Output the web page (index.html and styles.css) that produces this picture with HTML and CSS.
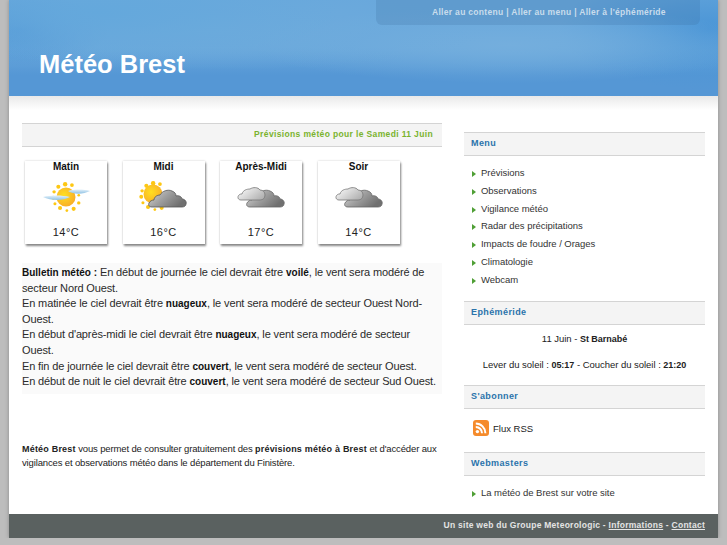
FILE: index.html
```html
<!DOCTYPE html>
<html lang="fr">
  <head>
    <meta charset="UTF-8" />
    <title>Météo Brest</title>
    <link rel="stylesheet" href="styles.css">
  </head>
  <body>
    <svg class="defs" width="0" height="0" aria-hidden="true">
      <defs>
        <linearGradient id="grey" x1="0" y1="0" x2="1" y2="0.5">
          <stop offset="0" stop-color="#d8d8d8" />
          <stop offset="0.5" stop-color="#a0a0a0" />
          <stop offset="1" stop-color="#707070" />
        </linearGradient>
        <linearGradient id="pale" x1="0" y1="0" x2="1" y2="0.6">
          <stop offset="0" stop-color="#ffffff" />
          <stop offset="1" stop-color="#b4b4b4" />
        </linearGradient>
        <linearGradient id="veil" x1="0" y1="0" x2="0" y2="1">
          <stop offset="0" stop-color="#e4f1fa" />
          <stop offset="1" stop-color="#8fc2e4" />
        </linearGradient>
        <radialGradient id="sun" cx="0.4" cy="0.4" r="0.7">
          <stop offset="0" stop-color="#ffdf20" />
          <stop offset="1" stop-color="#f8a828" />
        </radialGradient>
        <g id="rays">
          <circle cx="25" cy="3" r="2.2" />
          <circle cx="17" cy="2" r="2.6" />
          <circle cx="9" cy="5" r="2.4" />
          <circle cx="4" cy="11" r="2" />
          <circle cx="3" cy="18" r="2.3" />
          <circle cx="5" cy="25" r="1.8" />
          <circle cx="11" cy="30" r="2.4" />
          <circle cx="19" cy="33" r="1.6" />
          <circle cx="27" cy="31" r="2.4" />
          <circle cx="33" cy="24" r="2" />
          <circle cx="33" cy="15" r="1.6" />
        </g>
        <path id="cloud-big" d="M14 26c-3 0-4-2-3-4 1-2 3-3 5-3 0-3 3-5 6-5 2-4 8-6 12-4 3 1 4 3 4 5 3-1 6 1 6 3 3 0 5 3 4 5 0 2-2 3-4 3z" />
        <path id="cloud-small" d="M6 19c-3 0-4-3-2-5 1-1 2-1 3-1 1-4 5-5 8-5 3-2 8-2 10 1 3 0 5 2 5 5 0 3-2 5-5 5z" />
      </defs>
    </svg>

    <div class="page">
      <header class="top">
        <nav class="skip">
          <a href="#contenu">Aller au contenu</a> | <a href="#menu">Aller au menu</a> | <a href="#ephemeride">Aller à l'éphéméride</a>
        </nav>
        <h1>Météo Brest</h1>
      </header>

      <div class="columns">
        <main class="content" id="contenu">
          <h2 class="forecast-title">Prévisions météo pour le Samedi 11 Juin</h2>

          <div class="cards">
            <section class="card">
              <h3>Matin</h3>
              <svg class="weather" width="52" height="36" viewBox="0 0 52 36">
                <use href="#rays" transform="translate(10.7 1.5) scale(.85)" fill="#fdc713" />
                <circle cx="26" cy="16" r="9.5" fill="url(#sun)" />
                <path d="M28 10c6-2 16-2 22 0-6 3-16 4-22 0z" fill="url(#veil)" />
                <path d="M3 16c8-2 19-2 27 0-7 4-19 4-27 0z" fill="url(#veil)" />
              </svg>
              <p>14°C</p>
            </section>
            <section class="card">
              <h3>Midi</h3>
              <svg class="weather" width="52" height="36" viewBox="0 0 52 36">
                <use href="#rays" transform="translate(.7 .5) scale(.85)" fill="#fdc713" />
                <circle cx="15" cy="13" r="9.5" fill="url(#sun)" />
                <use href="#cloud-big" fill="url(#grey)" stroke="#555" stroke-width="0.8" />
              </svg>
              <p>16°C</p>
            </section>
            <section class="card">
              <h3>Après-Midi</h3>
              <svg class="weather" width="52" height="36" viewBox="0 0 52 36">
                <use href="#cloud-big" x="1" fill="url(#grey)" stroke="#666" stroke-width="0.8" />
                <use href="#cloud-small" fill="url(#pale)" stroke="#777" stroke-width="0.8" />
              </svg>
              <p>17°C</p>
            </section>
            <section class="card">
              <h3>Soir</h3>
              <svg class="weather" width="52" height="36" viewBox="0 0 52 36">
                <use href="#cloud-big" x="1" fill="url(#grey)" stroke="#666" stroke-width="0.8" />
                <use href="#cloud-small" fill="url(#pale)" stroke="#777" stroke-width="0.8" />
              </svg>
              <p>14°C</p>
            </section>
          </div>

          <p class="bulletin">
            <strong>Bulletin météo :</strong> En début de journée le ciel devrait être <strong>voilé</strong>, le vent sera modéré de secteur Nord Ouest.<br>
            En matinée le ciel devrait être <strong>nuageux</strong>, le vent sera modéré de secteur Ouest Nord-Ouest.<br>
            En début d'après-midi le ciel devrait être <strong>nuageux</strong>, le vent sera modéré de secteur Ouest.<br>
            En fin de journée le ciel devrait être <strong>couvert</strong>, le vent sera modéré de secteur Ouest.<br>
            En début de nuit le ciel devrait être <strong>couvert</strong>, le vent sera modéré de secteur Sud Ouest.
          </p>

          <p class="about">
            <strong>Météo Brest</strong> vous permet de consulter gratuitement des <strong>prévisions météo à Brest</strong> et d'accéder aux vigilances et observations météo dans le département du Finistère.
          </p>
        </main>

        <aside class="side">
          <h2 id="menu">Menu</h2>
          <ul class="links">
            <li><a href="#">Prévisions</a></li>
            <li><a href="#">Observations</a></li>
            <li><a href="#">Vigilance météo</a></li>
            <li><a href="#">Radar des précipitations</a></li>
            <li><a href="#">Impacts de foudre / Orages</a></li>
            <li><a href="#">Climatologie</a></li>
            <li><a href="#">Webcam</a></li>
          </ul>

          <h2 id="ephemeride">Ephéméride</h2>
          <div class="almanac">
            <p>11 Juin - <strong>St Barnabé</strong></p>
            <p>Lever du soleil : <strong>05:17</strong> - Coucher du soleil : <strong>21:20</strong></p>
          </div>

          <h2>S'abonner</h2>
          <a class="rss" href="#">
            <svg width="16" height="16" viewBox="0 0 16 16">
              <rect width="16" height="16" rx="3" fill="#f58b2c" />
              <circle cx="4.4" cy="11.6" r="1.7" fill="#fff" />
              <path d="M2.8 7a6.2 6.2 0 0 1 6.2 6.2M2.8 3.6a9.6 9.6 0 0 1 9.6 9.6" fill="none" stroke="#fff" stroke-width="2" />
            </svg>
            Flux RSS
          </a>

          <h2>Webmasters</h2>
          <ul class="links">
            <li><a href="#">La météo de Brest sur votre site</a></li>
          </ul>
        </aside>
      </div>

      <footer class="bottom">
        Un site web du Groupe Meteorologic - <a href="#">Informations</a> - <a href="#">Contact</a>
      </footer>
    </div>
  </body>
</html>
```

FILE: styles.css
```css
:root {
  --font-family: "Liberation Sans", Arial, sans-serif;
  --color-text: #222;
  --color-line: #d4d4d4;
  --color-band: #f4f4f4;
  --color-blue: #2a73ab;
  --color-green: #7ab32e;
}

* {
  box-sizing: border-box;
  margin: 0;
  padding: 0;
}

body {
  background-color: #bdbdbd;
  color: var(--color-text);
  font-family: var(--font-family);
  font-size: 12px;
}

a {
  color: inherit;
  text-decoration: none;
}

.defs {
  display: block;
  height: 0;
}

.page {
  background-color: #fff;
  box-shadow: 0 0 4px #8a8a8a;
  margin: 0 9px;
}

/* header */
.top {
  background-color: #5597d5;
  background-image:
    radial-gradient(ellipse 240px 50px at 90px 12px, #64a8dc 0%, rgb(100 168 220 / 0) 100%),
    radial-gradient(ellipse 280px 40px at 200px 30px, #6eabdc 0%, rgb(110 171 220 / 0) 100%),
    radial-gradient(ellipse 260px 38px at 500px 45px, #74aedd 0%, rgb(116 174 221 / 0) 100%),
    radial-gradient(ellipse 150px 60px at 700px 30px, #4a95d6 0%, rgb(74 149 214 / 0) 100%),
    radial-gradient(ellipse 90px 35px at 10px 30px, #4a92d4 0%, rgb(74 146 212 / 0) 100%),
    linear-gradient(#69a8dc 0, #69a8dc 50%, #5597d5 78%);
  display: flex;
  flex-direction: column;
  height: 96px;
  padding-left: 30px;
}

.skip {
  align-self: flex-end;
  background-color: rgb(60 110 160 / 0.22);
  border-radius: 0 0 6px 6px;
  color: #c9dcec;
  font-size: 8.5px;
  font-weight: bold;
  height: 25px;
  letter-spacing: 0.31px;
  line-height: 24px;
  margin-right: 18px;
  padding-left: 56px;
  width: 324px;
}

.top h1 {
  color: #fff;
  font-size: 25.5px;
  line-height: 30px;
  margin-top: 24px;
}

/* two columns */
.columns {
  background: linear-gradient(#e9e9e9 0, #fff 14px);
  display: flex;
  height: 418px;
  justify-content: space-between;
  padding: 27px 13px 0;
}

.content {
  width: 420px;
}

.forecast-title {
  background-color: var(--color-band);
  border-bottom: 1px solid var(--color-line);
  border-top: 1px solid var(--color-line);
  color: var(--color-green);
  font-size: 8.5px;
  height: 24px;
  letter-spacing: 0.36px;
  line-height: 21px;
  padding-right: 9px;
  text-align: right;
}

.cards {
  column-gap: 15.5px;
  display: flex;
  margin-top: 14px;
  padding-left: 3px;
}

.card {
  box-shadow: 1px 2px 2px #888, 0 0 2px #ccc;
  height: 83px;
  text-align: center;
  width: 82px;
}

.card h3 {
  color: #111;
  font-size: 10px;
  line-height: 12px;
}

.weather {
  display: block;
  margin: 8px auto 0;
}

.card p {
  font-size: 11px;
  letter-spacing: 0.5px;
  line-height: 14px;
  margin-top: 8px;
}

.bulletin {
  background-color: #fafafa;
  color: #2a2a2a;
  font-size: 11px;
  letter-spacing: -0.13px;
  line-height: 15.6px;
  margin-top: 19px;
  padding: 2px 0 4px;
}

.bulletin strong {
  color: #111;
  font-size: 10px;
  letter-spacing: 0;
}

.about {
  font-size: 9.5px;
  letter-spacing: -0.14px;
  line-height: 13px;
  margin-top: 48px;
}

.about strong {
  font-size: 9px;
  letter-spacing: 0.2px;
}

/* sidebar */
.side {
  margin-top: 9px;
  width: 241px;
}

.side h2 {
  background-color: var(--color-band);
  border-bottom: 1px solid var(--color-line);
  border-top: 1px solid var(--color-line);
  color: var(--color-blue);
  font-size: 9px;
  height: 24px;
  letter-spacing: 0.4px;
  line-height: 21px;
  padding-left: 7px;
}

.links {
  color: #333;
  font-size: 9.5px;
  letter-spacing: -0.03px;
  list-style-type: none;
  margin-bottom: 12px;
  padding: 8px 0 0 8px;
}

.links li {
  height: 17.8px;
  line-height: 17.8px;
  padding-left: 9px;
  position: relative;
}

.links li::before {
  border-bottom: 3.5px solid transparent;
  border-left: 4px solid #4f9f35;
  border-top: 3.5px solid transparent;
  content: "";
  left: 0;
  position: absolute;
  top: 7px;
}

.almanac {
  font-size: 9.5px;
  height: 60px;
  letter-spacing: -0.03px;
  line-height: 12px;
  padding-top: 8px;
  text-align: center;
}

.almanac p + p {
  margin-top: 14px;
}

.almanac strong {
  font-size: 9px;
}

.rss {
  align-items: center;
  column-gap: 4px;
  display: flex;
  font-size: 9.5px;
  height: 43px;
  padding: 0 0 4px 9px;
}

.bottom {
  background-color: #5a6160;
  color: #e4e4e4;
  font-size: 8.5px;
  font-weight: bold;
  height: 24px;
  letter-spacing: 0.26px;
  line-height: 22px;
  padding-right: 13px;
  text-align: right;
}

.bottom a {
  text-decoration: underline;
}
```
